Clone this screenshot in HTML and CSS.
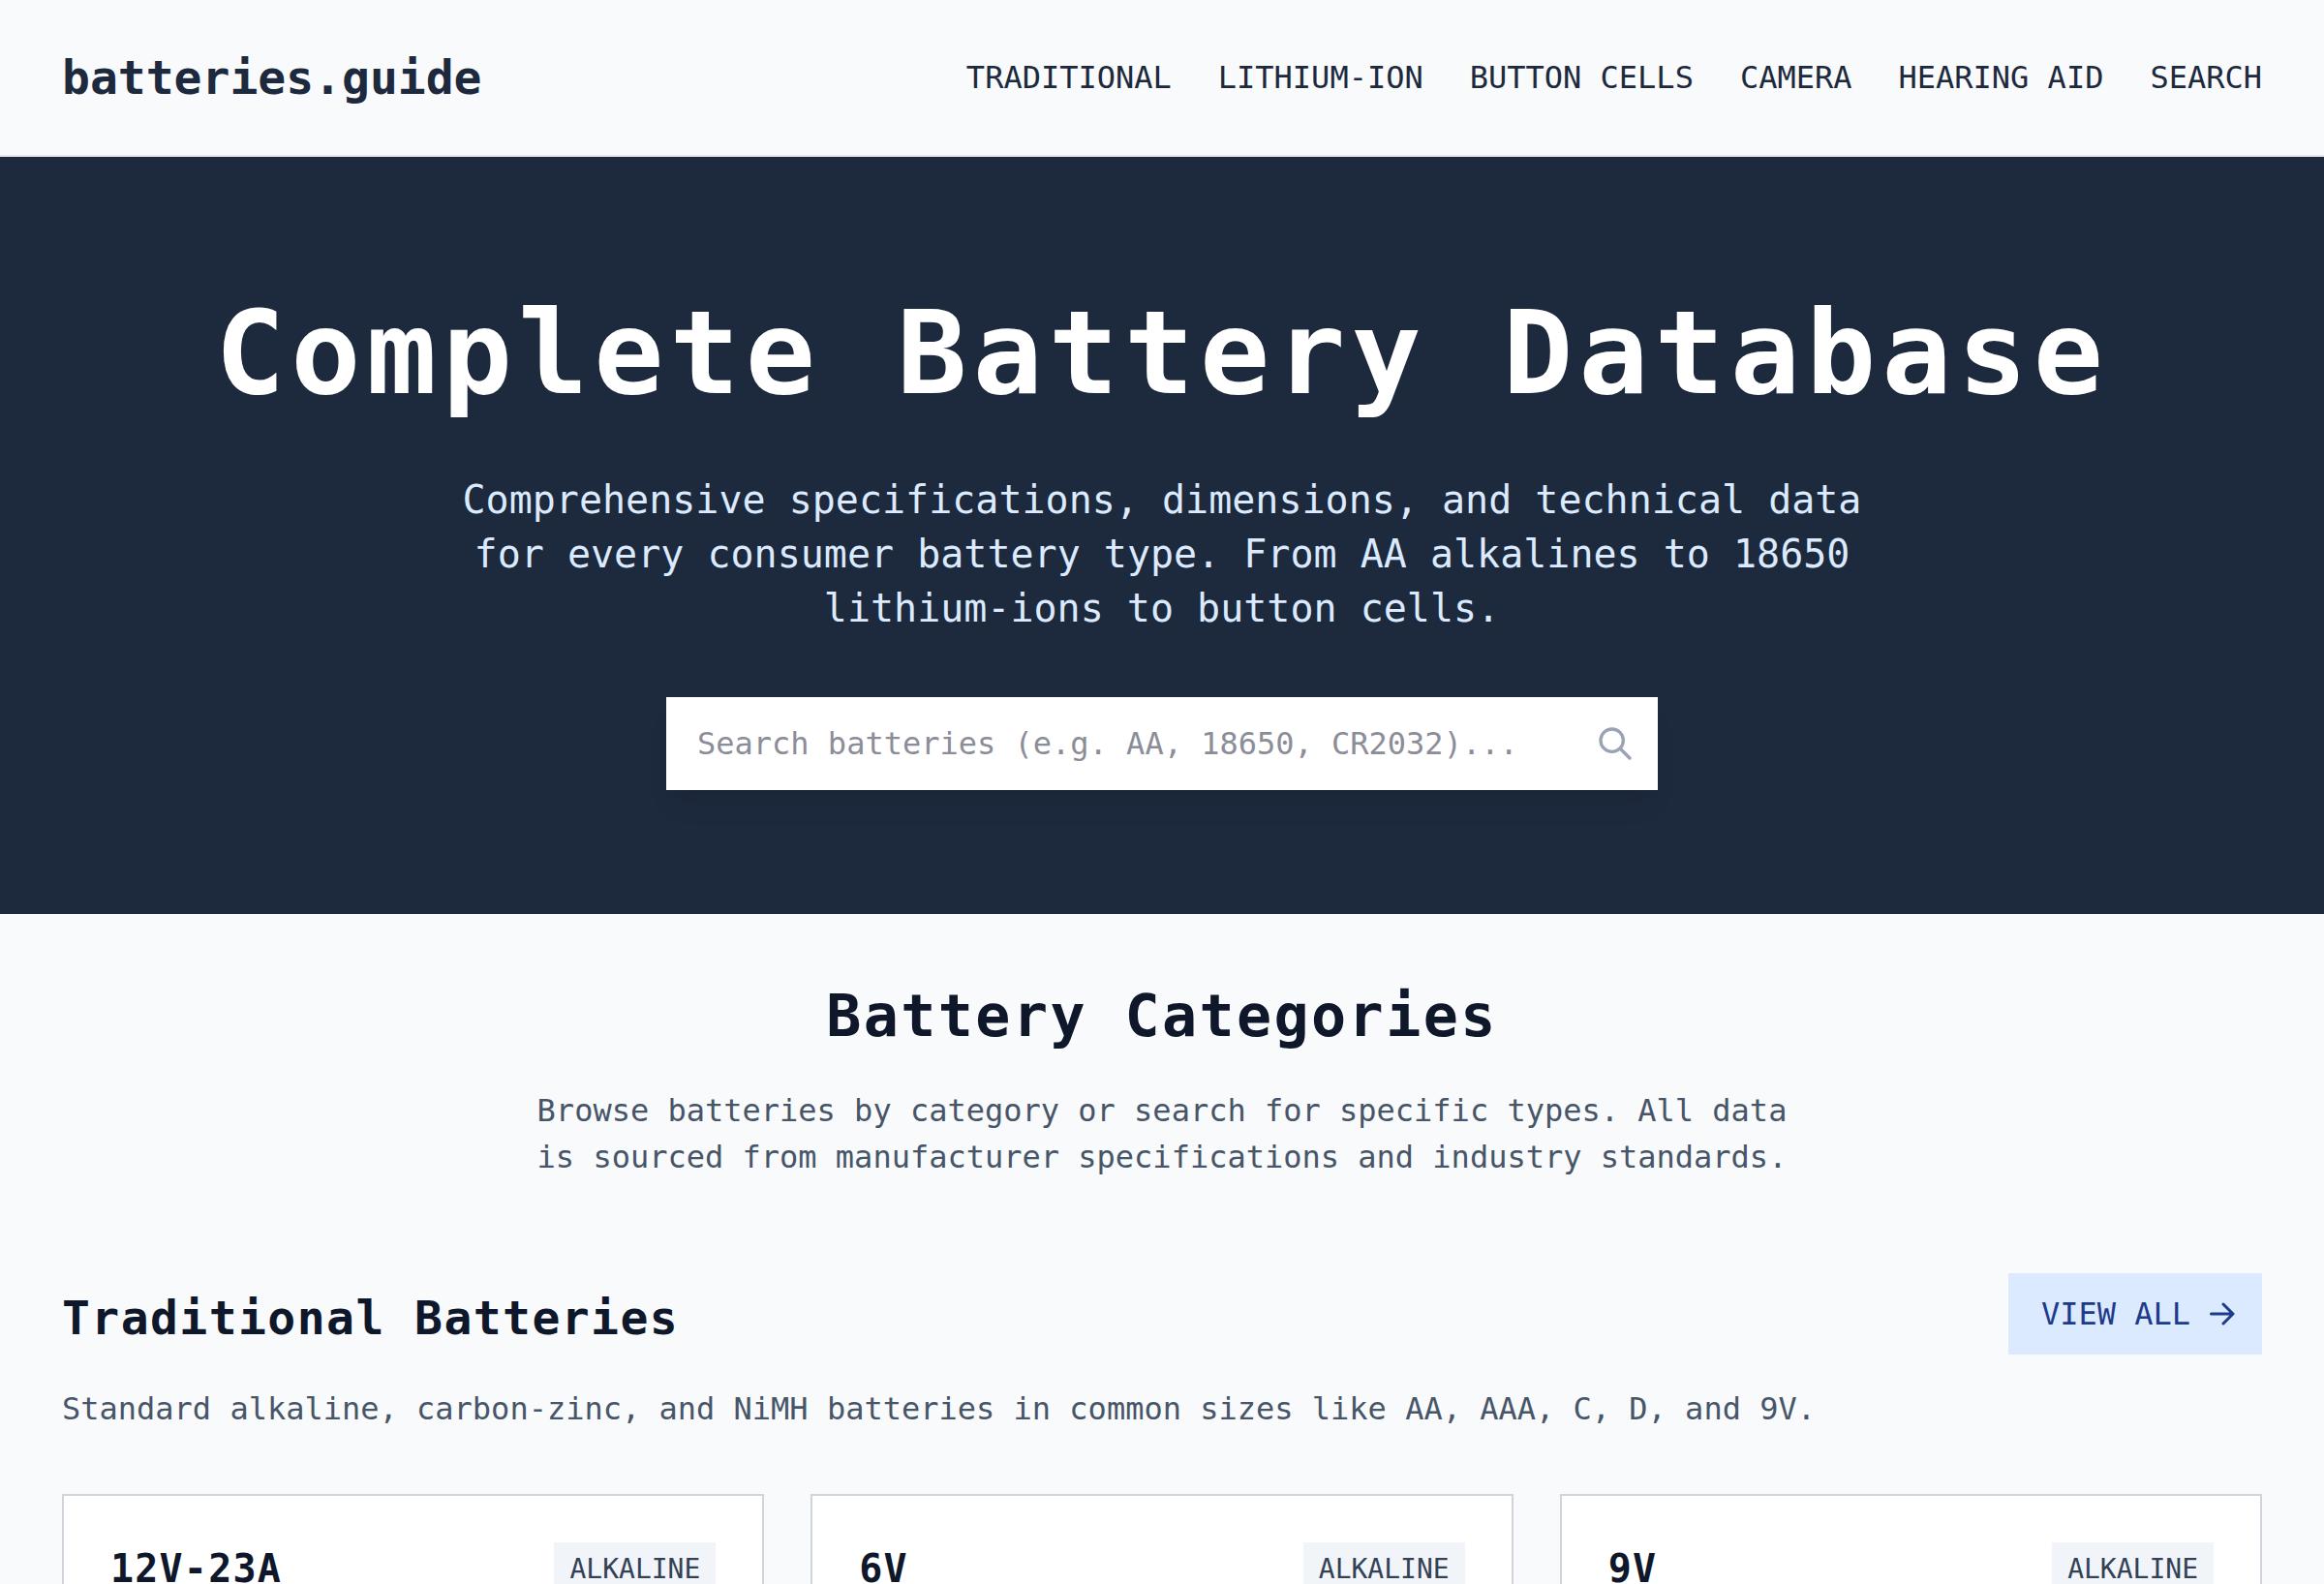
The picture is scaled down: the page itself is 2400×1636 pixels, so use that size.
FILE: index.html
```html
<!DOCTYPE html>
<html lang="en">
<head>
  <meta charset="utf-8">
  <meta name="viewport" content="width=device-width, initial-scale=1">
  <title>batteries.guide</title>
  <link rel="stylesheet" href="styles.css">
</head>
<body>
  <header class="site-header">
    <a class="logo" href="#">batteries.guide</a>
    <nav class="site-nav" aria-label="Main">
      <a href="#traditional">TRADITIONAL</a>
      <a href="#lithium-ion">LITHIUM-ION</a>
      <a href="#button-cells">BUTTON CELLS</a>
      <a href="#camera">CAMERA</a>
      <a href="#hearing-aid">HEARING AID</a>
      <a href="#search">SEARCH</a>
    </nav>
  </header>

  <main>
    <section class="hero">
      <h1 class="hero-title">Complete Battery Database</h1>
      <p class="hero-text">Comprehensive specifications, dimensions, and technical data for every consumer battery type. From AA alkalines to 18650 lithium-ions to button cells.</p>
      <form class="search" role="search">
        <input class="search-input" id="search" type="text" aria-label="Search batteries" placeholder="Search batteries (e.g. AA, 18650, CR2032)...">
        <svg class="search-icon" viewBox="0 0 24 24" fill="none" stroke="currentColor" stroke-width="2" stroke-linecap="round" stroke-linejoin="round" aria-hidden="true">
          <path d="M21 21l-6-6m2-5a7 7 0 11-14 0 7 7 0 0114 0z"/>
        </svg>
      </form>
    </section>

    <section class="categories">
      <div class="intro">
        <h2 class="intro-title">Battery Categories</h2>
        <p class="intro-text">Browse batteries by category or search for specific types. All data is sourced from manufacturer specifications and industry standards.</p>
      </div>

      <section class="category" id="traditional">
        <div class="category-head">
          <h3 class="category-title">Traditional Batteries</h3>
          <a class="view-all" href="#traditional">VIEW ALL
            <svg class="arrow" viewBox="0 0 26 24" fill="none" stroke="currentColor" stroke-width="3" stroke-linecap="round" stroke-linejoin="round" aria-hidden="true">
              <path d="M1.5 12H24M14 2l10 10-10 10"/>
            </svg>
          </a>
        </div>
        <p class="category-text">Standard alkaline, carbon-zinc, and NiMH batteries in common sizes like AA, AAA, C, D, and 9V.</p>
        <div class="cards">
          <article class="card">
            <h4 class="card-title">12V-23A</h4>
            <span class="badge">ALKALINE</span>
          </article>
          <article class="card">
            <h4 class="card-title">6V</h4>
            <span class="badge">ALKALINE</span>
          </article>
          <article class="card">
            <h4 class="card-title">9V</h4>
            <span class="badge">ALKALINE</span>
          </article>
        </div>
      </section>
    </section>
  </main>
</body>
</html>
```

FILE: styles.css
```css
*,
*::before,
*::after {
  box-sizing: border-box;
}

body {
  margin: 0;
  background: #f9fafb;
  color: #0f172a;
  font-family: "DejaVu Sans Mono", Menlo, monospace;
  font-size: 32px;
  line-height: 48px;
  scrollbar-width: none;
}

html {
  scrollbar-width: none;
}

h1,
h2,
h3,
h4,
p {
  margin: 0;
}

a {
  color: inherit;
  text-decoration: none;
}

.site-header {
  display: flex;
  align-items: center;
  justify-content: space-between;
  padding: 48px 64px;
  border-bottom: 2px solid #e5e7eb;
  color: #1d293d;
}

.logo {
  font-size: 48px;
  font-weight: 700;
  line-height: 64px;
}

.site-nav {
  display: flex;
  gap: 48px;
}

.hero {
  padding: 128px 64px;
  background: #1d293d;
  color: #fff;
  text-align: center;
}

.hero-title {
  margin-bottom: 48px;
  font-size: 120px;
  font-weight: 700;
  line-height: 150px;
  letter-spacing: 0.05em;
}

.hero-text {
  max-width: 1536px;
  margin: 0 auto 64px;
  color: #dbeafe;
  font-size: 40px;
  line-height: 56px;
}

.search {
  position: relative;
  max-width: 1024px;
  margin: 0 auto;
}

.search-input {
  display: block;
  width: 100%;
  height: 96px;
  padding: 0 96px 0 32px;
  border: 0;
  border-radius: 0;
  background: #fff;
  box-shadow: 0 20px 30px -6px rgba(0, 0, 0, 0.06), 0 8px 12px -8px rgba(0, 0, 0, 0.06);
  color: #0f172a;
  font: inherit;
}

.search-input::placeholder {
  color: #8b8d98;
  opacity: 1;
}

.search-icon {
  position: absolute;
  top: 28px;
  right: 24px;
  width: 40px;
  height: 40px;
  color: #99a3b3;
}

.categories {
  padding: 64px;
}

.intro {
  margin-bottom: 96px;
  text-align: center;
}

.intro-title {
  margin-bottom: 32px;
  font-size: 60px;
  font-weight: 700;
  line-height: 83px;
  letter-spacing: 0.04em;
}

.intro-text {
  max-width: 1344px;
  margin: 0 auto;
  color: #475569;
}

.category-head {
  display: flex;
  align-items: flex-end;
  justify-content: space-between;
  margin-bottom: 32px;
}

.category-title {
  font-size: 48px;
  font-weight: 700;
  line-height: 75px;
  letter-spacing: 0.03em;
}

.view-all {
  display: flex;
  align-items: center;
  gap: 20px;
  padding: 18px 28px 18px 34px;
  background: #dbeafe;
  color: #1e3a8a;
}

.arrow {
  width: 26px;
  height: 24px;
}

.category-text {
  margin-bottom: 64px;
  color: #475569;
}

.cards {
  display: grid;
  grid-template-columns: repeat(3, 1fr);
  gap: 48px;
}

.card {
  display: flex;
  align-items: flex-start;
  justify-content: space-between;
  padding: 48px;
  border: 2px solid #d1d5db;
  background: #fff;
}

.card-title {
  font-size: 40px;
  font-weight: 700;
  line-height: 54px;
  letter-spacing: 0.03em;
}

.badge {
  padding: 8px 16px;
  background: #f1f5f9;
  color: #334155;
  font-size: 28px;
  line-height: 40px;
}
```
